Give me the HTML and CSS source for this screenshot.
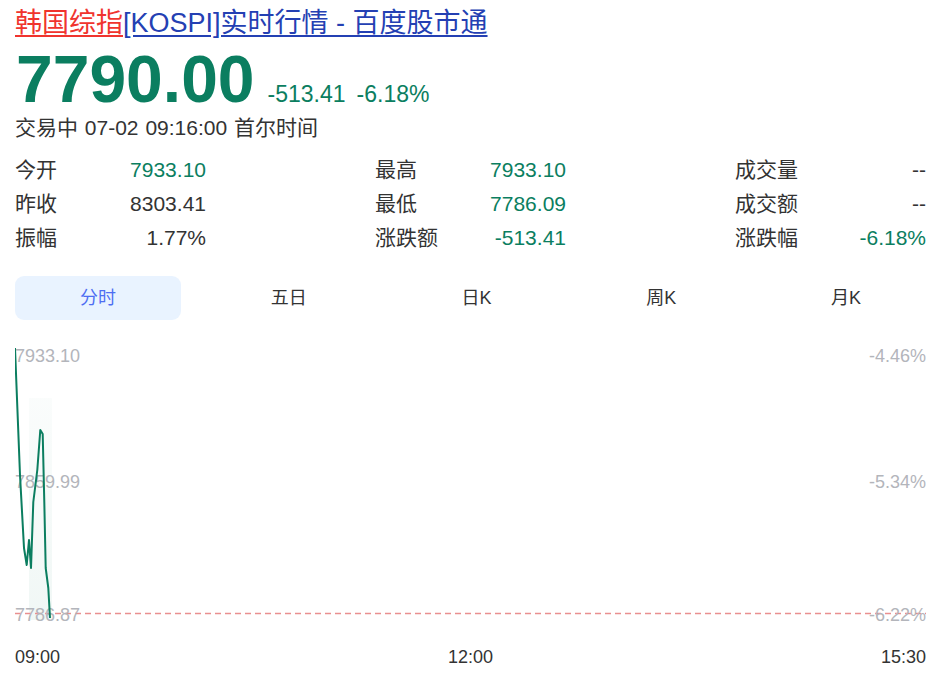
FILE: index.html
```html
<!DOCTYPE html>
<html lang="zh-CN">
<head>
<meta charset="utf-8">
<title>韩国综指[KOSPI]实时行情 - 百度股市通</title>
<link rel="stylesheet" href="styles.css">
</head>
<body>
<div class="page">
  <h1 class="title"><a class="kw" href="#">韩国综指</a><a class="lnk" href="#">[KOSPI]实时行情 - 百度股市通</a></h1>

  <div class="price-row">
    <span class="price">7790.00</span>
    <span class="chg first">-513.41</span>
    <span class="chg">-6.18%</span>
  </div>
  <div class="status">交易中 07-02 09:16:00 首尔时间</div>

  <div class="stats">
    <div class="col">
      <div class="row"><span class="lab">今开</span><span class="val down">7933.10</span></div>
      <div class="row"><span class="lab">昨收</span><span class="val">8303.41</span></div>
      <div class="row"><span class="lab">振幅</span><span class="val">1.77%</span></div>
    </div>
    <div class="col">
      <div class="row"><span class="lab">最高</span><span class="val down">7933.10</span></div>
      <div class="row"><span class="lab">最低</span><span class="val down">7786.09</span></div>
      <div class="row"><span class="lab">涨跌额</span><span class="val down">-513.41</span></div>
    </div>
    <div class="col">
      <div class="row"><span class="lab">成交量</span><span class="val">--</span></div>
      <div class="row"><span class="lab">成交额</span><span class="val">--</span></div>
      <div class="row"><span class="lab">涨跌幅</span><span class="val down">-6.18%</span></div>
    </div>
  </div>

  <div class="tabs">
    <span class="tab active">分时</span>
    <span class="tab">五日</span>
    <span class="tab">日K</span>
    <span class="tab">周K</span>
    <span class="tab">月K</span>
  </div>

  <svg class="chart" width="911" height="290" viewBox="0 0 911 290">
    <defs>
      <linearGradient id="area" x1="0" y1="0" x2="0" y2="1">
        <stop offset="0" stop-color="#0b7e60" stop-opacity="0.02"/>
        <stop offset="1" stop-color="#0b7e60" stop-opacity="0.06"/>
      </linearGradient>
    </defs>
    <rect x="14" y="58" width="23" height="222" fill="url(#area)"/>
    <line x1="0" y1="273.5" x2="911" y2="273.5" stroke="#e98f8f" stroke-width="1.5" stroke-dasharray="6 4"/>
    <text class="ax" x="0" y="22">7933.10</text>
    <text class="ax" x="0" y="148">7859.99</text>
    <text class="ax" x="0" y="281">7786.87</text>
    <text class="ax" x="911" y="22" text-anchor="end">-4.46%</text>
    <text class="ax" x="911" y="148" text-anchor="end">-5.34%</text>
    <text class="ax" x="911" y="281" text-anchor="end">-6.22%</text>
    <polyline fill="none" stroke="#0b7e60" stroke-width="2" stroke-linejoin="round"
      points="0,8 5,135 9,208 11.7,225 14,200 16,228 18.3,162 22.3,130 25.3,90 27.7,94 29.3,162 30.7,228 33.3,248 35,278"/>
  </svg>

  <div class="times">
    <span>09:00</span>
    <span>12:00</span>
    <span>15:30</span>
  </div>
</div>
</body>
</html>
```

FILE: styles.css
```css
html, body {
  margin: 0;
  padding: 0;
  background: #ffffff;
}
body {
  font-family: "Liberation Sans", Arial, "Noto Sans CJK SC", sans-serif;
  color: #333333;
}
.page {
  padding: 6px 10px 0 15px;
}
.title {
  margin: 0;
  font-size: 27px;
  font-weight: normal;
  line-height: 34px;
}
.title a {
  text-decoration: underline;
  text-underline-offset: 3px;
}
.kw {
  color: #f0342e;
}
.lnk {
  color: #2440b3;
}
.price-row {
  display: flex;
  align-items: baseline;
  margin-top: 6px;
  height: 68px;
}
.price {
  font-size: 66px;
  font-weight: bold;
  line-height: 66px;
  color: #0b7e60;
  margin-left: 1px;
}
.chg {
  font-size: 23px;
  color: #0b7e60;
  margin-left: 11px;
}
.chg.first {
  margin-left: 13px;
}
.status {
  font-size: 21px;
  line-height: 28px;
  margin-top: 0;
  word-spacing: 1px;
}
.stats {
  display: flex;
  justify-content: space-between;
  margin-top: 11px;
}
.col {
  width: 191px;
}
.row {
  display: flex;
  justify-content: space-between;
  height: 34px;
  line-height: 34px;
  font-size: 21px;
}
.down {
  color: #0b7e60;
}
.tabs {
  display: flex;
  justify-content: space-between;
  margin-top: 21px;
  height: 44px;
}
.tab {
  padding: 0 65px;
  line-height: 44px;
  font-size: 18px;
  color: #333333;
  border-radius: 9px;
}
.tab.active {
  background: #e9f3ff;
  color: #4e6ef2;
}
.chart {
  display: block;
  margin-top: 20px;
}
.ax {
  font-family: "Liberation Sans", Arial, sans-serif;
  font-size: 18px;
  fill: #b3b5bb;
}
.times {
  display: flex;
  justify-content: space-between;
  font-size: 18px;
  line-height: 22px;
  color: #333333;
  margin-top: 16px;
}
```
